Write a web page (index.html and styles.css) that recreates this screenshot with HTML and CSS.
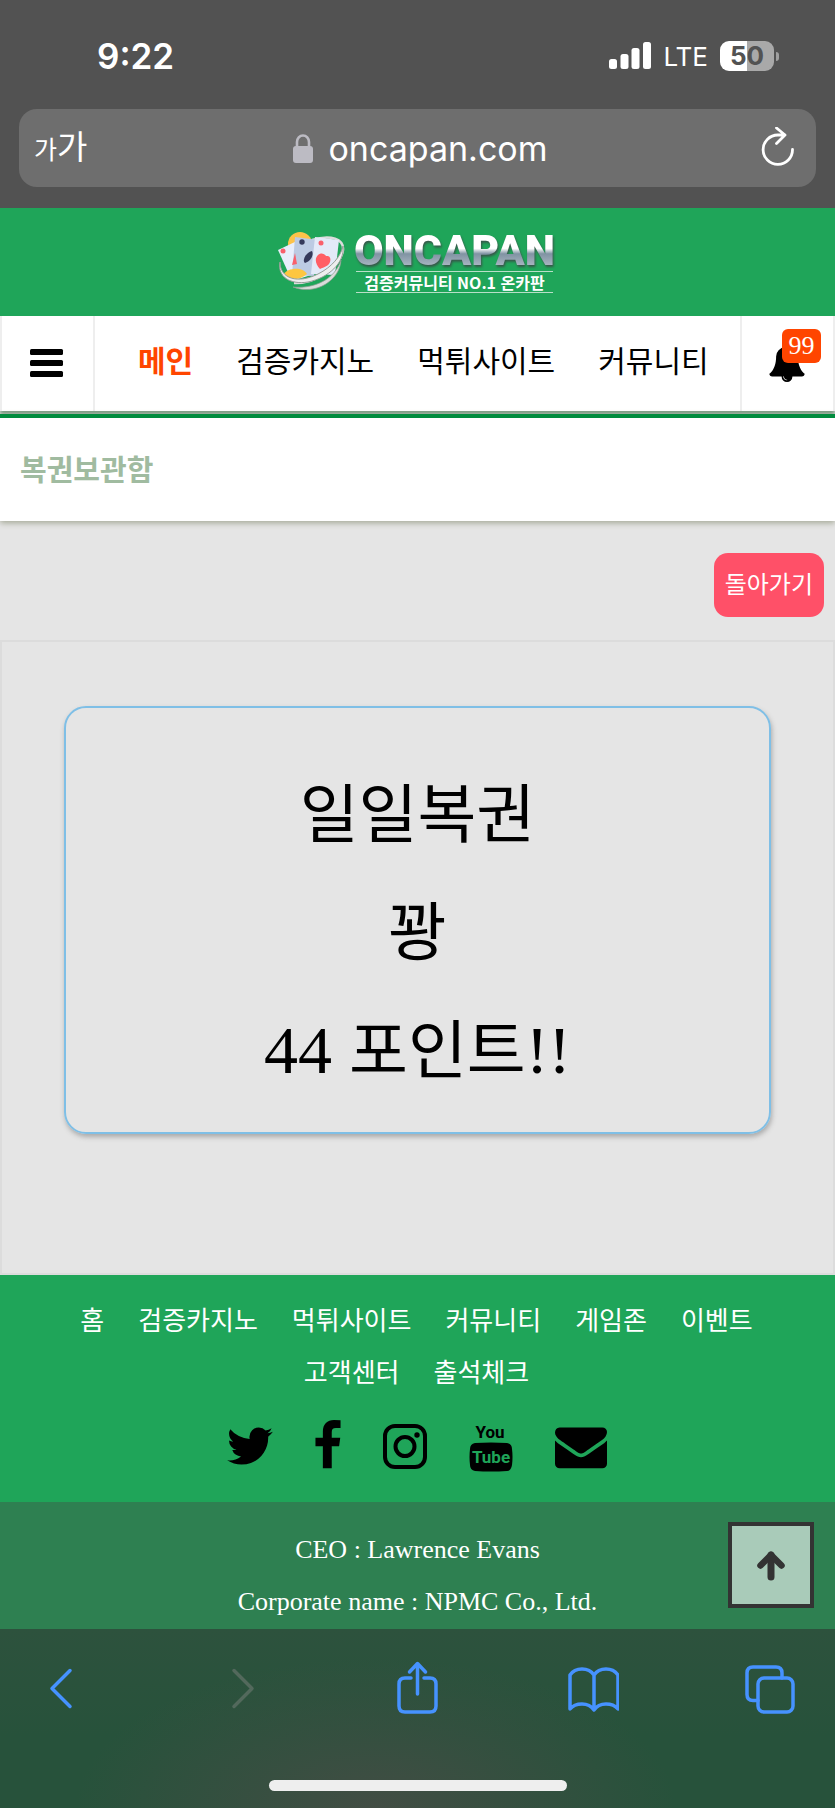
FILE: index.html
```html
<!DOCTYPE html>
<html lang="ko">
<head>
<meta charset="utf-8">
<meta name="viewport" content="width=device-width, initial-scale=1">
<title>복권보관함 - ONCAPAN</title>
<link rel="stylesheet" href="styles.css">
</head>
<body>
<div class="browser-top">
  <div class="status">
    <span class="status-time">9:22</span>
    <div class="status-right">
      <svg class="signal" width="42" height="28" viewBox="0 0 42 28" fill="#fff" aria-hidden="true"><rect x="0" y="17" width="8" height="10" rx="2.5"/><rect x="11.500" y="12" width="8" height="15" rx="2.500"/><rect x="22.500" y="6" width="8" height="21" rx="2.500"/><rect x="34" y="0" width="8" height="27" rx="2.500"/></svg>
      <span class="network">LTE</span>
      <span class="battery">50</span>
    </div>
  </div>
  <div class="address">
    <button class="text-size" type="button" aria-label="글자 크기"><span class="size-small">가</span><span class="size-large">가</span></button>
    <div class="address-site">
      <svg width="20" height="29" viewBox="0 0 20 29" aria-hidden="true"><path d="M4 13V8a6 6.500 0 0 1 12 0v5" fill="none" stroke="#bcbbc3" stroke-width="2.600"/><rect x="0" y="12" width="20" height="17" rx="3" fill="#bcbbc3"/></svg>
      <span>oncapan.com</span>
    </div>
    <button class="reload" type="button" aria-label="새로고침"><svg width="34" height="42" viewBox="0 0 34 42" fill="none" stroke="#fff" stroke-width="2.800" stroke-linecap="round" stroke-linejoin="round"><path d="M31.500 22.500A14.700 14.700 0 1 1 17 8h7M15.500 1l8.500 7-8.500 8.500"/></svg></button>
  </div>
</div>

<header class="site-header">
  <a class="logo" href="#">
    <svg width="70" height="62" viewBox="0 0 70 62" aria-hidden="true">
      <circle cx="24" cy="13" r="12" fill="#fdc34a"/>
      <path d="M36 9C55 3 68 8 67 19c-2 15-26 34-49 33" fill="none" stroke="#dcdcdc" stroke-width="2.500"/>
      <path d="M2 19l19-9 14 34-19 6z" fill="#e8eefb"/>
      <path d="M19 6l24 3-5 36-22-1z" fill="#bccbe3"/>
      <path d="M39 6l24 3-4 35-24-1z" fill="#e3eaf8"/>
      <circle cx="26" cy="11" r="2.700" fill="#34395a"/><circle cx="45" cy="12" r="2.500" fill="#f9606b"/><circle cx="7" cy="20" r="2.500" fill="#f9606b"/>
      <path d="M36 20c2 4-1 10-7 12-3-2 0-10 7-12z" fill="#34395a"/>
      <path d="M19 22l-3 12 5-1z" fill="#f9606b"/>
      <path d="M42 24c5-4 8 1 8 1s6-1 4 6c-1 4-6 5-10 7-4-4-6-10-2-14z" fill="#ff5e65"/>
      <path d="M7 44c5-8 20-8 24-1-7 6-18 8-24 1z" fill="#fdc640"/>
      <path d="M4 31C4 48 22 53 42 43 56 36 65 25 67 15c2 17-15 32-35 36C15 54 1 46 4 31z" fill="#eee" stroke="#969f98" stroke-width="1"/>
      <path d="M17 56c22 2 42-8 48-27-1 20-25 36-48 27z" fill="#d9dcd9" stroke="#8d9c91" stroke-width=".7"/>
    </svg>
    <span class="logo-words">
      <strong class="logo-name">ONCAPAN</strong>
      <span class="logo-tag">검증커뮤니티 NO.1 온카판</span>
    </span>
  </a>
</header>

<nav class="main-nav" aria-label="주 메뉴">
  <button class="nav-side" type="button" aria-label="전체 메뉴"><svg width="34" height="28" viewBox="0 0 34 28" aria-hidden="true"><rect width="33" height="6" rx="1.500"/><rect y="11" width="33" height="6" rx="1.500"/><rect y="22" width="33" height="6" rx="1.500"/></svg></button>
  <div class="nav-links">
    <a class="current" href="#">메인</a>
    <a href="#">검증카지노</a>
    <a href="#">먹튀사이트</a>
    <a href="#">커뮤니티</a>
  </div>
  <button class="nav-side alerts" type="button" aria-label="알림 99"><svg width="38" height="38" viewBox="0 0 1792 1792" aria-hidden="true"><path d="M912 1696q0-16-16-16-59 0-101.500-42.500t-42.500-101.500q0-16-16-16t-16 16q0 73 51.500 124.500t124.500 51.500q16 0 16-16zm816-288q0 52-38 90t-90 38h-448q0 106-75 181t-181 75-181-75-75-181h-448q-52 0-90-38t-38-90q50-42 91-88t85-119.500 74.500-158.500 50-206 19.500-260q0-152 117-282.500t307-158.500q-8-19-8-39 0-40 28-68t68-28 68 28 28 68q0 20-8 39 190 28 307 158.500t117 282.500q0 139 19.500 260t50 206 74.500 158.500 85 119.500 91 88z"/></svg><span class="badge">99</span></button>
</nav>

<h1 class="page-title">복권보관함</h1>

<main>
  <div class="actions"><a class="back" href="#">돌아가기</a></div>
  <section class="panel">
    <div class="ticket">
      <p>일일복권</p>
      <p>꽝</p>
      <p><span class="latin">44 </span>포인트<span class="latin">!!</span></p>
    </div>
  </section>
</main>

<footer>
  <div class="footer-main">
    <nav class="footer-links" aria-label="하단 메뉴">
      <a href="#">홈</a><a href="#">검증카지노</a><a href="#">먹튀사이트</a><a href="#">커뮤니티</a><a href="#">게임존</a><a href="#">이벤트</a><a href="#">고객센터</a><a href="#">출석체크</a>
    </nav>
    <div class="social">
      <a href="#" aria-label="Twitter"><svg width="46" height="52" viewBox="108 0 1576 1792" aria-hidden="true"><path d="M1684 408q-67 98-162 167 1 14 1 42 0 130-38 259.500t-115.500 248.500-184.500 210.500-258 146-323 54.500q-271 0-496-145 35 4 78 4 225 0 401-138-105-2-188-64.500t-114-159.500q33 5 61 5 43 0 85-11-112-23-185.500-111.500t-73.500-205.500v-4q68 38 146 41-66-44-105-115t-39-154q0-88 44-163 121 149 294.500 238.500t371.500 99.500q-8-38-8-74 0-134 94.500-228.500t228.500-94.500q140 0 236 102 109-21 205-78-37 115-142 178 93-10 186-50z"/></svg></a>
      <a href="#" aria-label="Facebook"><svg width="26" height="52" viewBox="479 0 864 1792" aria-hidden="true"><path d="M1343 12v264h-157q-86 0-116 36t-30 108v189h293l-39 296h-254v759h-306v-759h-255v-296h255v-218q0-186 104-288.500t277-102.500q147 0 228 12z"/></svg></a>
      <a href="#" aria-label="Instagram"><svg width="44" height="52" viewBox="0 0 44 52" fill="none" stroke="#000" stroke-width="4" aria-hidden="true"><rect x="2" y="6" width="40" height="41" rx="10"/><circle cx="22" cy="26.500" r="9.500"/><circle cx="34" cy="15" r="2.700" fill="#000" stroke="none"/></svg></a>
      <a href="#" aria-label="YouTube"><svg class="youtube" width="44" height="52" viewBox="0 0 44 52" aria-hidden="true"><text x="21" y="18" text-anchor="middle">You</text><path d="M6 23q16-1 32 0 5 1 5 6 1 8 0 16-1 6-5 6-16 1-32 0-5-1-5-6-1-8 0-16 0-5 5-6z"/><text class="cutout" x="22" y="43" text-anchor="middle">Tube</text></svg></a>
      <a href="#" aria-label="메일"><svg width="52" height="52" viewBox="0 0 1792 1792" aria-hidden="true"><path d="M1792 710v794q0 66-47 113t-113 47h-1472q-66 0-113-47t-47-113v-794q44 49 101 87 362 246 497 345 57 42 92.500 65.500t94.500 48 110 24.500h2q51 0 110-24.500t94.500-48 92.500-65.500q170-123 498-345 57-39 100-87zm0-294q0 79-49 151t-122 123q-376 261-468 325-10 7-42.500 31t-54 38.500-52 32.500-57.500 27-50 9h-2q-23 0-50-9t-57.500-27-52-32.500-54-38.500-42.500-31q-91-64-262-182.500t-205-142.500q-62-42-117-115.500t-55-136.500q0-78 41.500-130t118.500-52h1472q65 0 112.500 47t47.500 113z"/></svg></a>
    </div>
  </div>
  <div class="company">
    <p>CEO : Lawrence Evans</p>
    <p>Corporate name : NPMC Co., Ltd.</p>
    <button class="to-top" type="button" aria-label="맨 위로"><svg width="30" height="34" viewBox="0 0 30 34" fill="none" stroke="#333" stroke-width="7" stroke-linecap="round" stroke-linejoin="round"><path d="M15 29V7"/><path d="M4.500 17.500L15 7l10.500 10.500" stroke-width="6.500"/></svg></button>
  </div>
</footer>

<div class="browser-bottom">
  <div class="toolbar">
    <button type="button" aria-label="뒤로"><svg viewBox="0 0 52 54"><path d="M35 9.500L17 27.500l18 18"/></svg></button>
    <button type="button" aria-label="앞으로" disabled><svg viewBox="0 0 52 54"><path d="M22 9.500l18 18-18 18"/></svg></button>
    <button type="button" aria-label="공유"><svg viewBox="0 0 52 54"><path d="M21 17h-6q-6 0-6 6v22q0 6 6 6h25q6 0 6-6V23q0-6-6-6h-6M27.500 33V3M19.500 11l8-8.500 8 8.500"/></svg></button>
    <button type="button" aria-label="책갈피"><svg viewBox="0 0 52 54"><path d="M27 14q-4-6-12-6-8 0-12 6v34q4-5 12-5 8 0 12 6 4-6 12-6 8 0 12 5V14q-4-6-12-6-8 0-12 6v35"/></svg></button>
    <button type="button" aria-label="탭"><svg viewBox="0 0 52 54"><rect x="14" y="17" width="35" height="34" rx="6"/><path d="M14 39.500h-5q-6 0-6-6V12q0-6 6-6h23q6 0 6 6v5"/></svg></button>
  </div>
  <div class="home-bar"></div>
</div>
</body>
</html>
```
FILE: styles.css
```css
* { box-sizing: border-box; }
body {
  margin: 0;
  background: #e5e5e5;
  color: #000;
  font-family: "Liberation Serif", "Noto Sans CJK KR", serif;
}
p, h1 { margin: 0; }
a { color: inherit; text-decoration: none; }
button { border: 0; padding: 0; background: none; color: inherit; font: inherit; }
svg { display: block; }

.browser-top {
  padding: 32px 19px 21px;
  background: #525252;
  color: #fff;
  font-family: Inter, "Noto Sans CJK KR", sans-serif;
}
.status {
  display: flex;
  justify-content: space-between;
  align-items: center;
  height: 48px;
  margin-bottom: 29px;
  padding: 0 42px 0 78px;
}
.status-time { font-size: 35px; font-weight: 600; }
.status-right { display: flex; align-items: center; gap: 12px; }
.network { font-size: 26px; }
.battery {
  position: relative;
  width: 54px;
  border-radius: 9px;
  background: linear-gradient(90deg, #fff 50%, #a9a9a9 50%);
  color: #525252;
  font-size: 26px;
  font-weight: 700;
  line-height: 30px;
  text-align: center;
}
.battery::after {
  content: "";
  position: absolute;
  left: 56px;
  top: 11px;
  width: 3px;
  height: 9px;
  border-radius: 0 4px 4px 0;
  background: #a0a0a0;
}
.address {
  display: flex;
  align-items: center;
  justify-content: space-between;
  height: 78px;
  padding: 0 21px 0 15px;
  border-radius: 18px;
  background: #6e6e6e;
}
.text-size { display: flex; align-items: baseline; width: 46px; line-height: 40px; }
.size-small { font-size: 25px; }
.size-large { font-size: 33px; }
.address-site { display: flex; align-items: center; gap: 15px; font-size: 34px; }

.site-header {
  display: flex;
  justify-content: center;
  padding: 22px 4px 23px 0;
  background: #1fa559;
}
.logo { display: flex; align-items: center; gap: 8px; color: #fff; }
.logo-words { display: flex; flex-direction: column; align-items: center; }
.logo-name {
  background: linear-gradient(#fff 45%, #8093a3 58%, #a6b3bf 85%);
  background-clip: text;
  color: transparent;
  filter: drop-shadow(1px 2px 1px #37574a);
  font: 900 43px/41px Roboto, sans-serif;
}
.logo-tag {
  border-top: 1px solid #b9dfc8;
  border-bottom: 1px solid #b9dfc8;
  padding: 0 8px;
  font: 700 16px/20px "Noto Sans CJK KR", sans-serif;
}

.main-nav {
  display: flex;
  position: relative;
  height: 95px;
  background: #fff;
  box-shadow: 0 4px 4px #7b9c83;
}
.nav-side {
  display: flex;
  align-items: center;
  justify-content: center;
  flex: 0 0 95px;
  border: solid #eee;
  border-width: 0 2px;
  padding: 0 2px 2px 0;
}
.alerts { position: relative; }
.badge {
  position: absolute;
  top: 13px;
  right: 12px;
  width: 39px;
  border-radius: 6px;
  background: #ff4500;
  color: #fff;
  font-size: 26px;
  line-height: 34px;
}
.nav-links {
  display: flex;
  flex: 1;
  align-items: center;
  gap: 43px;
  padding: 0 0 9px 43px;
  font-size: 30px;
  white-space: nowrap;
}
.current { color: #ff4500; font-weight: 700; }

.page-title {
  position: relative;
  margin-top: 3px;
  border-top: 4px solid #008c3e;
  padding: 3px 20px 0;
  background: #fff;
  box-shadow: 0 2px 6px #a3a795;
  color: #a0bba0;
  font-size: 29px;
  font-weight: 700;
  line-height: 100px;
}

.actions { display: flex; justify-content: flex-end; padding: 32px 11px 23px; }
.back {
  border-radius: 14px;
  padding: 0 11px;
  background: #ff5068;
  color: #fff;
  font-size: 24px;
  line-height: 64px;
}
.panel { border: 2px solid #dcdcdc; padding: 64px 62px 139px; }
.ticket {
  border: 2px solid #7fbfe6;
  border-radius: 22px;
  padding: 49px 0 21px;
  box-shadow: 1px 3px 5px #aaa;
  font-size: 64px;
  line-height: 118px;
  text-align: center;
}
.latin { font-size: 68px; line-height: 1; }

.footer-main { padding: 21px 42px 30px 40px; background: #1fa559; }
.footer-links {
  display: flex;
  flex-wrap: wrap;
  justify-content: center;
  column-gap: 34px;
  color: #fff;
  font-size: 26px;
  line-height: 52px;
}
.social { display: flex; justify-content: center; gap: 42px; padding-top: 20px; }
.youtube { font: 700 17px Roboto, sans-serif; }
.cutout { fill: #1fa559; }
.company {
  position: relative;
  padding: 22px 0 1px;
  background: #2e8051;
  color: #fff;
  font-size: 26px;
  line-height: 52px;
  text-align: center;
}
.to-top {
  position: absolute;
  top: 20px;
  right: 21px;
  display: flex;
  align-items: center;
  justify-content: center;
  width: 86px;
  height: 86px;
  border: 4px solid #333;
  background: #a9cbb9;
}

.browser-bottom {
  padding: 32px 0 17px;
  background: radial-gradient(ellipse 300px 150px at 45% 100%, #424d44, #424d4400), linear-gradient(#2d523d, #27523b 60%);
}
.toolbar { display: flex; justify-content: space-between; padding: 0 39px 0 35px; }
.toolbar svg {
  width: 52px;
  height: 54px;
  fill: none;
  stroke: #4692ff;
  stroke-width: 3.5;
  stroke-linecap: round;
  stroke-linejoin: round;
}
.toolbar button:disabled svg { stroke: #53695c; }
.home-bar { width: 298px; height: 11px; margin: 65px auto 0; border-radius: 6px; background: #eee; }
```
